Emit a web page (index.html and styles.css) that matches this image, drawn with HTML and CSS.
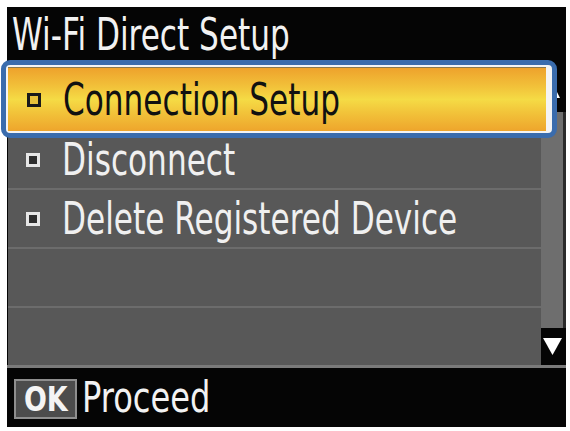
FILE: index.html
```html
<!DOCTYPE html>
<html>
<head>
<meta charset="utf-8">
<link rel="stylesheet" href="styles.css">
</head>
<body>
<div class="screen">
  <div class="header"><span class="title">Wi-Fi Direct Setup</span></div>
  <div class="body">
    <div class="list">
      <div class="row first">
        <div class="highlight">
          <div class="hl-inner">
            <span class="bullet dark"></span><span class="label">Connection Setup</span>
          </div>
        </div>
      </div>
      <div class="row"><span class="bullet"></span><span class="label">Disconnect</span></div>
      <div class="row"><span class="bullet"></span><span class="label">Delete Registered Device</span></div>
      <div class="row"></div>
      <div class="row"></div>
    </div>
    <div class="scrollbar">
      <div class="sb-up">
        <svg width="14" height="14" viewBox="0 0 14 14"><polygon points="7,1 13,13 1,13" fill="#ffffff"/></svg>
      </div>
      <div class="sb-track"></div>
      <div class="sb-down">
        <svg width="19" height="17" viewBox="0 0 19 17"><polygon points="0,0 19,0 9.5,17" fill="#ffffff"/></svg>
      </div>
    </div>
  </div>
  <div class="footer">
    <span class="ok"><span class="ok-text">OK</span></span><span class="proceed">Proceed</span>
  </div>
</div>
</body>
</html>
```
FILE: styles.css
```css
html, body {
  margin: 0;
  padding: 0;
  background: #ffffff;
}
body {
  width: 570px;
  height: 431px;
  overflow: hidden;
  font-family: "DejaVu Sans Condensed", "DejaVu Sans", sans-serif;
}
.screen {
  margin: 7px 0 0 7px;
  width: 559px;
  height: 420px;
  background: #050505;
  display: flex;
  flex-direction: column;
}
.header {
  height: 65px;
  padding-left: 5px;
  box-sizing: border-box;
  flex: none;
}
.title {
  display: inline-block;
  color: #f2f2f2;
  font-size: 45px;
  line-height: 45px;
  padding-top: 5px;
  transform: scaleX(0.77);
  transform-origin: left center;
  white-space: nowrap;
}
.body {
  display: flex;
  height: 293px;
  flex: none;
  border-bottom: 3px solid #7a7a7a;
}
.list {
  flex: 1 1 auto;
  min-width: 0;
  display: flex;
  flex-direction: column;
  gap: 2px;
  background: #6c6c6c;
  margin-left: 1px;
}
.row {
  height: 57px;
  background: #585858;
  display: flex;
  align-items: center;
  padding-left: 18px;
  position: relative;
  min-width: 0;
}
.bullet {
  width: 8px;
  height: 8px;
  border: 3px solid #e6e6e6;
  background: #2e2e2e;
  flex: none;
}
.bullet.dark {
  border-color: #1a1a1a;
  background: #e9c23a;
}
.label {
  display: inline-block;
  margin-left: 22px;
  font-size: 45px;
  line-height: 57px;
  color: #f0f0f0;
  white-space: nowrap;
  transform: scaleX(0.77);
  transform-origin: left center;
}
.highlight {
  position: absolute;
  left: -7px;
  top: -12px;
  width: 556px;
  height: 78px;
  box-sizing: border-box;
  border: 5px solid #3a6cad;
  border-radius: 9px;
  background: #f4f4f4;
  padding: 2px;
  z-index: 2;
}
.hl-inner {
  height: 100%;
  box-sizing: border-box;
  border-top: 1px solid #8a7a50;
  background: linear-gradient(to bottom, #eea22c 0%, #f2c23a 30%, #f5db45 50%, #f2c43a 70%, #eea52c 100%);
  display: flex;
  align-items: center;
  padding-left: 19px;
  margin-right: 4px;
}
.hl-inner .label {
  color: #111111;
}
.scrollbar {
  flex: none;
  width: 25px;
  display: flex;
  flex-direction: column;
}
.sb-up {
  height: 40px;
  background: #050505;
  display: flex;
  align-items: center;
  justify-content: center;
}
.sb-track {
  flex: 1;
  background: #6e6e6e;
  border-right: 3px solid #2a2a2a;
}
.sb-down {
  height: 37px;
  background: #050505;
  display: flex;
  align-items: center;
  justify-content: center;
  padding-right: 2px;
}
.footer {
  flex: 1;
  display: flex;
  align-items: center;
  padding-left: 7px;
}
.ok {
  width: 63px;
  height: 40px;
  box-sizing: border-box;
  border: 2px solid #8e8e8e;
  background: #4c4c4c;
  display: flex;
  align-items: center;
  justify-content: center;
  margin-top: 1px;
  flex: none;
}
.ok-text {
  font-family: "DejaVu Sans Condensed", "DejaVu Sans", sans-serif;
  font-weight: bold;
  font-size: 34px;
  line-height: 36px;
  color: #f4f4f4;
  display: inline-block;
  transform: scaleX(0.88);
}
.proceed {
  display: inline-block;
  margin-left: 5px;
  font-size: 42px;
  line-height: 60px;
  color: #f2f2f2;
  transform: scaleX(0.85);
  transform-origin: left center;
  white-space: nowrap;
}
```
